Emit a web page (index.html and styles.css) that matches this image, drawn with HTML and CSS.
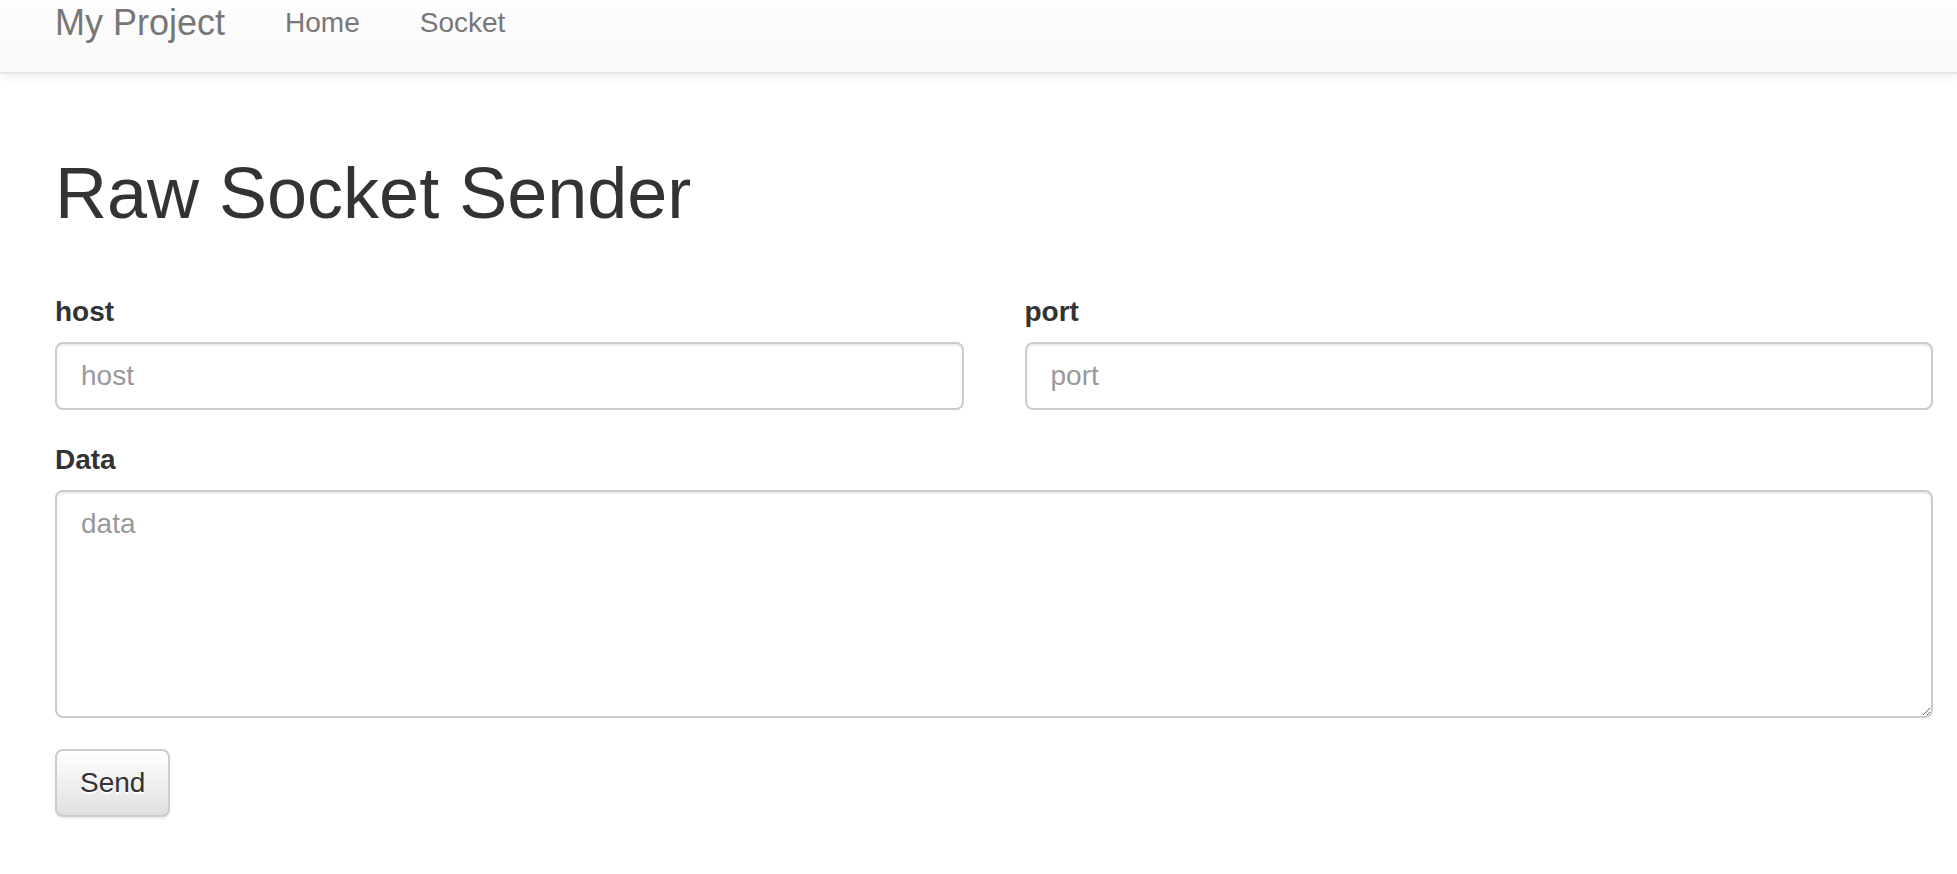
FILE: index.html
```html
<!DOCTYPE html>
<html lang="en">
<head>
    <meta charset="UTF-8">
    <meta name="viewport" content="width=device-width, initial-scale=1.0">
    <title>Raw Socket Sender - My Project</title>
    <link rel="stylesheet" href="styles.css">
</head>
<body>

    <nav class="navbar">
        <a class="navbar-brand" href="#">My Project</a>
        <ul class="nav">
            <li><a href="#">Home</a></li>
            <li><a href="#">Socket</a></li>
        </ul>
    </nav>

    <div class="container">
        <h1>Raw Socket Sender</h1>
        <form id="socketForm">
            <div class="row">
                <div class="form-group">
                    <label for="host">host</label>
                    <input type="text" id="host" class="form-control" placeholder="host">
                </div>
                <div class="form-group">
                    <label for="port">port</label>
                    <input type="text" id="port" class="form-control" placeholder="port">
                </div>
            </div>

            <div class="form-group">
                <label for="data">Data</label>
                <textarea id="data" class="form-control" rows="5" placeholder="data"></textarea>
            </div>

            <button type="submit" class="btn">Send</button>
        </form>
    </div>

</body>
</html>
```

FILE: styles.css
```css
* {
    box-sizing: border-box;
}

body {
    margin: 0;
    font-family: 'Liberation Sans', Arial, sans-serif;
    font-size: 28px;
    line-height: 40px;
    color: #333;
    background-color: #fff;
}

.navbar {
    display: flex;
    align-items: flex-start;
    height: 74px;
    padding: 3px 24px 0 55px;
    background-image: linear-gradient(to bottom, #fdfdfd 0, #f8f8f8 100%);
    border-bottom: 2px solid #e7e7e7;
    box-shadow: 0 2px 10px rgba(0, 0, 0, 0.075);
}

.navbar-brand {
    font-size: 36px;
    line-height: 40px;
    color: #777;
    text-decoration: none;
    padding-right: 30px;
}

.nav {
    display: flex;
    list-style: none;
    margin: 0;
    padding: 0;
}

.nav a {
    display: block;
    padding: 0 30px;
    color: #777;
    text-decoration: none;
}

.container {
    padding: 0 24px 40px 55px;
}

h1 {
    margin: 80px 0 59px;
    font-size: 72px;
    font-weight: 500;
    line-height: 79px;
}

.row {
    display: grid;
    grid-template-columns: 1fr 1fr;
    column-gap: 61px;
}

.form-group {
    margin-bottom: 30px;
}

label {
    display: block;
    margin-bottom: 10px;
    font-weight: bold;
}

.form-control {
    display: block;
    width: 100%;
    height: 68px;
    padding: 12px 24px;
    font-family: inherit;
    font-size: 28px;
    line-height: 40px;
    color: #555;
    background-color: #fff;
    border: 2px solid #ccc;
    border-radius: 8px;
    box-shadow: inset 0 2px 2px rgba(0, 0, 0, 0.075);
}

.form-control::placeholder {
    color: #999;
}

textarea.form-control {
    height: 228px;
}

.btn {
    margin-top: 1px;
    padding: 12px 23px;
    font-family: inherit;
    font-size: 28px;
    line-height: 40px;
    color: #333;
    text-shadow: 0 2px 0 #fff;
    background-image: linear-gradient(to bottom, #fff 0, #e0e0e0 100%);
    border: 2px solid #ccc;
    border-radius: 8px;
    box-shadow: inset 0 2px 0 rgba(255, 255, 255, 0.15), 0 2px 2px rgba(0, 0, 0, 0.075);
    cursor: pointer;
}
```
